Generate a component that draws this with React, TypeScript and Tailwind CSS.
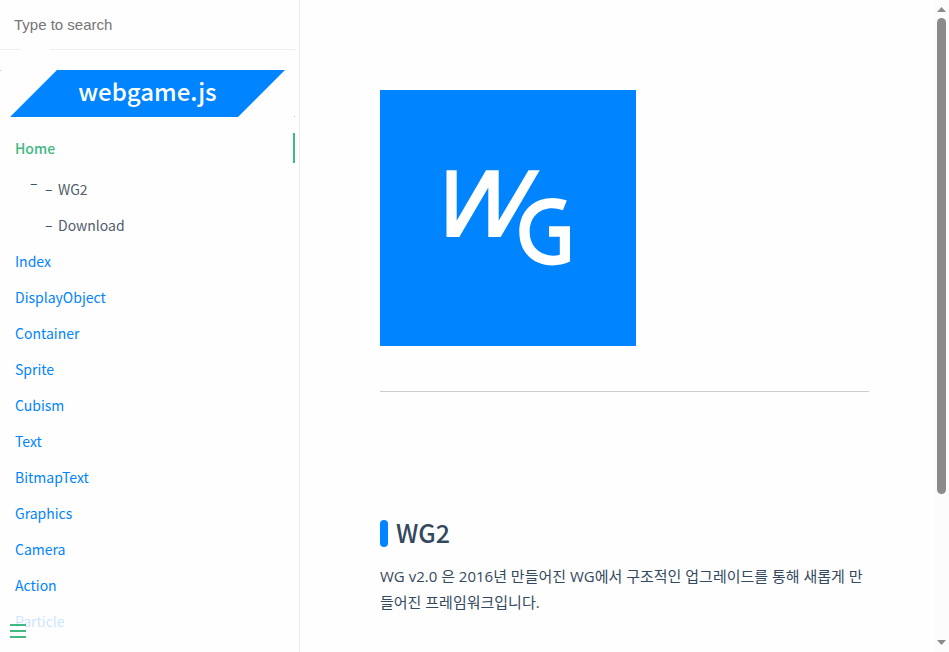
import React from "react";

const links = [
  "Index",
  "DisplayObject",
  "Container",
  "Sprite",
  "Cubism",
  "Text",
  "BitmapText",
  "Graphics",
  "Camera",
  "Action",
];

function Sidebar() {
  return (
    <aside className="relative flex w-[300px] shrink-0 flex-col overflow-hidden border-r border-[#ebebeb] pr-1">
      <div className="relative h-[50px] border-b border-[#eeeeee]">
        <input
          type="search"
          aria-label="Search"
          placeholder="Type to search"
          className="h-[49px] w-full bg-transparent pl-[14px] font-['Liberation_Sans',sans-serif] text-[15px] text-[#505d6b] outline-none placeholder:text-[#757575]"
        />
        <span className="absolute -bottom-px left-[21px] h-px w-[29px] bg-[#fefefe]" />
      </div>
      <h1 className="relative mt-5 h-[47px] text-center text-[24px] leading-[42px] font-medium text-white">
        <span className="absolute top-0 left-0 size-px bg-[#9dcfff]" />
        <span className="absolute right-0 bottom-0 size-px bg-[#9dcfff]" />
        <a
          href="#home"
          className="block h-full bg-[#0084ff] [clip-path:polygon(57px_0,285px_0,238px_100%,10px_100%)]"
        >
          webgame.js
        </a>
      </h1>
      <nav className="mt-4 pl-[15px] text-[14px] leading-9 text-[#0084ff]">
        <a
          href="#home"
          className="block border-r-2 border-[#42b983] leading-[30px] font-medium text-[#42b983]"
        >
          Home
        </a>
        <ul className="mt-2 text-[#505d6b]">
          <li className="flex pl-[15px]">
            <span className="w-[15px] leading-[22px] text-[#34495e]">–</span>
            <span className="w-[13px] leading-[34px] text-[#34495e]">–</span>
            <a href="#wg2">WG2</a>
          </li>
          <li className="flex pl-[30px]">
            <span className="w-[13px] leading-[34px] text-[#34495e]">–</span>
            <a href="#download">Download</a>
          </li>
        </ul>
        <ul>
          {links.map((label) => (
            <li key={label}>
              <a href={"#" + label}>{label}</a>
            </li>
          ))}
          <li className="opacity-20">
            <a href="#Particle">Particle</a>
          </li>
        </ul>
      </nav>
      <button
        type="button"
        aria-label="Toggle sidebar"
        className="absolute bottom-[14px] left-[10px] flex w-4 flex-col gap-1"
      >
        <span className="h-[2px] w-full bg-[#42b983]" />
        <span className="h-[2px] w-full bg-[#42b983]" />
        <span className="h-[2px] w-full bg-[#42b983]" />
      </button>
    </aside>
  );
}

function Logo() {
  return (
    <svg viewBox="0 0 256 256" role="img" aria-label="WG" className="block size-64 bg-[#0084ff]">
      <path fill="#fff" d="M66.5 80.3H76.7V130.7L106 80.3H118.7V130.7L148.5 80.3H159.7L120.7 147H108.3V97.5L79.3 147H66.5Z" />
      <path fill="#fff" d="M186.8 110.6C166 102.5 139.3 112.5 139.3 142C139.3 171 167 182 190 171.6V136.2H169V146.7H179.8V164.8C166 168.5 149.7 160 149.7 142C149.7 122.5 166 114 182.9 120.3Z" />
    </svg>
  );
}

function Scrollbar() {
  return (
    <div aria-hidden="true" className="flex w-[15px] shrink-0 flex-col items-center bg-[#fcfcfc] py-[7px]">
      <svg viewBox="0 0 9 5" className="h-[5px] w-[9px]">
        <path fill="#8b8b8b" d="M0 5L4.5 0L9 5Z" />
      </svg>
      <div className="mt-[6px] w-[9px] grow-[476] rounded-full bg-[#8b8b8b]" />
      <div className="grow-[146]" />
      <svg viewBox="0 0 9 5" className="h-[5px] w-[9px]">
        <path fill="#8b8b8b" d="M0 0L4.5 5L9 0Z" />
      </svg>
    </div>
  );
}

export default function App() {
  return (
    <div className="flex h-screen overflow-hidden bg-[#fefefe] font-['Noto_Sans_CJK_KR',sans-serif] text-[#34495e]">
      <Sidebar />
      <main className="min-w-0 flex-1 overflow-hidden pt-[90px] pr-[65px] pl-20">
        <Logo />
        <hr className="mt-[45px] border-t border-[#cccccc]" />
        <h2 id="wg2" className="mt-[128px] flex items-start gap-2 text-[25px] leading-6 font-medium">
          <span className="h-[27px] w-2 rounded-full bg-[#0084ff]" />
          WG2
        </h2>
        <p className="mt-4 font-['Open_Sans','Noto_Sans_CJK_KR',sans-serif] text-[15px] leading-[26px]">
          WG v2.0 은 2016년 만들어진 WG에서 구조적인 업그레이드를 통해 새롭게 만들어진 프레임워크입니다.
        </p>
      </main>
      <Scrollbar />
    </div>
  );
}
